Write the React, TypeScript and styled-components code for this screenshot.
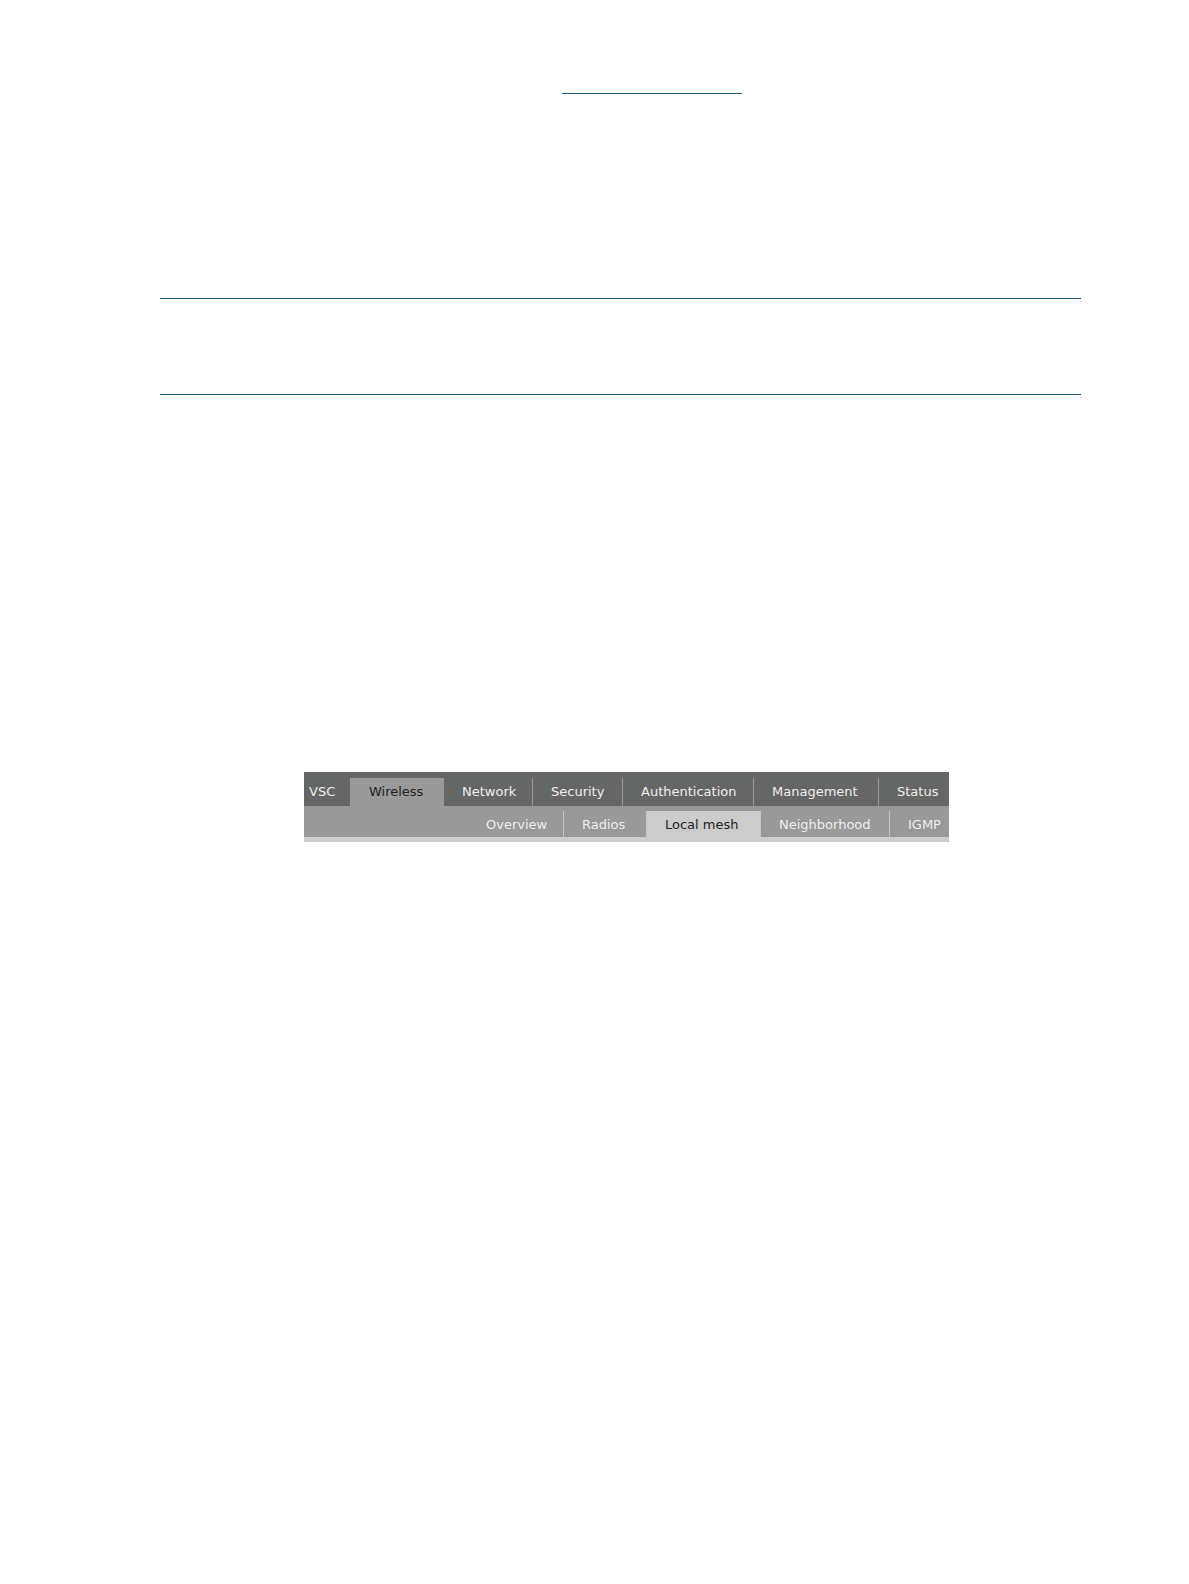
import React from "react";
import styled, { createGlobalStyle } from "styled-components";

const GlobalStyle = createGlobalStyle`
  * { box-sizing: border-box; }
  body {
    margin: 0;
    background: #ffffff;
    font-family: "DejaVu Sans", Verdana, sans-serif;
  }
`;

const Page = styled.main`
  min-height: 100vh;
  padding: 93px 108px 40px 160px;
`;

const Rule = styled.hr`
  width: 100%;
  height: 1px;
  margin: 0;
  border: 0;
  background: #195a78;
`;

const ShortRule = styled(Rule)`
  width: 180px;
  margin-left: 402px;
`;

const Note = styled.section`
  display: flex;
  flex-direction: column;
  gap: 95px;
  margin-top: 204px;
`;

const Menu = styled.nav`
  max-width: 645px;
  margin: 377px 0 0 144px;
  border-bottom: 5px solid #cccccc;
  overflow: hidden;
`;

const Row = styled.div<{ $columns: string; $sub?: boolean }>`
  display: grid;
  grid-template-columns: ${(p) => p.$columns};
  height: ${(p) => (p.$sub ? 31 : 34)}px;
  padding-top: ${(p) => (p.$sub ? 5 : 6)}px;
  background: ${(p) => (p.$sub ? "#999999" : "#656766")};
`;

const Tab = styled.button<{ $active?: boolean; $sub?: boolean; $edge?: boolean; $plain?: boolean }>`
  min-width: 0;
  padding: ${(p) => (p.$sub ? 2 : 0)}px 0 0 ${(p) => (p.$edge ? 5 : 18)}px;
  border: 0;
  border-left: ${(p) => (p.$edge || p.$plain ? 0 : 1)}px solid
    ${(p) => (p.$sub ? "#c6c6c6" : "#999999")};
  background: ${(p) => (p.$active ? (p.$sub ? "#cccccc" : "#999999") : "transparent")};
  color: ${(p) => (p.$active ? "#222222" : "#eeeeee")};
  font-family: inherit;
  font-size: 13px;
  line-height: 16px;
  text-align: left;
  white-space: nowrap;
  cursor: pointer;
`;

const topTabs = ["VSC", "Wireless", "Network", "Security", "Authentication", "Management", "Status"];
const subTabs = ["Overview", "Radios", "Local mesh", "Neighborhood", "IGMP"];

export default function App() {
  return (
    <>
      <GlobalStyle />
      <Page>
        <ShortRule />
        <Note>
          <Rule />
          <Rule />
        </Note>
        <Menu>
          <Row $columns="46fr 94fr 88fr 90fr 131fr 125fr 71fr">
            {topTabs.map((name, i) => (
              <Tab key={name} $edge={i === 0} $plain={i === 2} $active={name === "Wireless"}>
                {name}
              </Tab>
            ))}
          </Row>
          <Row $sub $columns="164fr 95fr 83fr 114fr 129fr 60fr">
            <span />
            {subTabs.map((name, i) => (
              <Tab key={name} $sub $plain={i === 0} $active={name === "Local mesh"}>
                {name}
              </Tab>
            ))}
          </Row>
        </Menu>
      </Page>
    </>
  );
}
